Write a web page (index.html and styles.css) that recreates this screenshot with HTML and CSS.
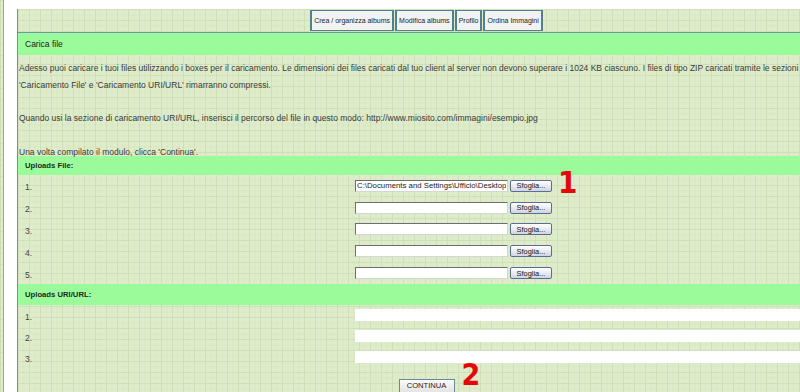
FILE: index.html
```html
<html>

<head>
  <link rel="stylesheet" href="styles.css">
  <title>
    Carica file
  </title>
</head>

<body>
  <div class="page">
    <div class="main">
      <div class="tabs">
        <a class="tab">Crea / organizza albums</a>
        <a class="tab">Modifica albums</a>
        <a class="tab">Profilo</a>
        <a class="tab">Ordina Immagini</a>
      </div>
      <div class="box">
        <div class="bar">Carica file</div>
        <div class="intro">
          Adesso puoi caricare i tuoi files utilizzando i boxes per il caricamento. Le dimensioni dei files caricati dal tuo client al server non devono superare i 1024 KB ciascuno. I files di tipo ZIP caricati tramite le sezioni<br>
          'Caricamento File' e 'Caricamento URI/URL' rimarranno compressi.<br>
          <br>
          Quando usi la sezione di caricamento URI/URL, inserisci il percorso del file in questo modo: http://www.miosito.com/immagini/esempio.jpg<br>
          <br>
          Una volta compilato il modulo, clicca 'Continua'.
        </div>

        <div class="bar sub">Uploads File:</div>
        <div class="row file">
          <span class="num">1.</span>
          <span class="field">
            <input class="path" type="text" value="C:\Documents and Settings\Ufficio\Desktop\foto.jpg">
            <button class="browse">Sfoglia...</button>
            <span class="mark one">1</span>
          </span>
        </div>
        <div class="row file">
          <span class="num">2.</span>
          <span class="field"><input class="path" type="text"><button class="browse">Sfoglia...</button></span>
        </div>
        <div class="row file">
          <span class="num">3.</span>
          <span class="field"><input class="path" type="text"><button class="browse">Sfoglia...</button></span>
        </div>
        <div class="row file">
          <span class="num">4.</span>
          <span class="field"><input class="path" type="text"><button class="browse">Sfoglia...</button></span>
        </div>
        <div class="row file">
          <span class="num">5.</span>
          <span class="field"><input class="path" type="text"><button class="browse">Sfoglia...</button></span>
        </div>

        <div class="bar sub url-bar">Uploads URI/URL:</div>
        <div class="row url">
          <span class="num">1.</span>
          <span class="field"><input class="link" type="text"></span>
        </div>
        <div class="row url">
          <span class="num">2.</span>
          <span class="field"><input class="link" type="text"></span>
        </div>
        <div class="row url">
          <span class="num">3.</span>
          <span class="field"><input class="link" type="text"></span>
        </div>

        <div class="submit">
          <span class="go">
            <button class="continua">CONTINUA</button>
            <span class="mark two">2</span>
          </span>
        </div>
      </div>
    </div>
  </div>
</body>

</html>
```

FILE: styles.css
```css
html,
body {
  margin: 0;
  height: 100%;
  overflow: hidden;
}

body {
  font-family: "Liberation Sans", Arial, sans-serif;
  font-size: 8.5px;
  color: #3a3a3a;
  background-color: #dfeccb;
  background-image:
    linear-gradient(#cfe0b6 1px, transparent 1px),
    linear-gradient(90deg, #cfe0b6 1px, transparent 1px),
    linear-gradient(#d8e7c2 1px, transparent 1px),
    linear-gradient(90deg, #d8e7c2 1px, transparent 1px);
  background-size: 11px 11px, 11px 11px, 5.5px 5.5px, 5.5px 5.5px;
}

.page {
  margin-left: 3px;
  height: 100%;
  box-sizing: border-box;
  padding: 9px 0 0 13px;
  border-left: 1px solid #9aa49a;
  background: #ffffff;
}

.main {
  width: 818px;
  height: 100%;
  padding-top: 1px;
  box-sizing: border-box;
  border-left: 1px solid #6d97a6;
  background-color: #dfeccb;
  background-image:
    linear-gradient(#cfe0b6 1px, transparent 1px),
    linear-gradient(90deg, #cfe0b6 1px, transparent 1px),
    linear-gradient(#d8e7c2 1px, transparent 1px),
    linear-gradient(90deg, #d8e7c2 1px, transparent 1px);
  background-size: 11px 11px, 11px 11px, 5.5px 5.5px, 5.5px 5.5px;
}

.tabs {
  display: flex;
  justify-content: center;
  gap: 1px;
  height: 21px;
}

.tab {
  display: flex;
  align-items: center;
  padding: 0 2px;
  border: 1px solid #52808f;
  border-left-width: 2px;
  border-right-width: 2px;
  background: #f1f2f2;
  color: #222;
  font-size: 7px;
  white-space: nowrap;
}

.box {
  margin-top: 1px;
  border-top: 1px solid #6d97a6;
}

.bar {
  height: 22px;
  line-height: 22px;
  padding-left: 7px;
  background: #9bfa9a;
  color: #222;
}

.bar.sub {
  height: 19px;
  line-height: 19px;
  font-size: 7.7px;
  font-weight: bold;
  color: #1d2a1d;
}

.bar.url-bar {
  height: 21px;
  line-height: 21px;
}

.intro {
  padding: 5px 0 0 1px;
  height: 101px;
  box-sizing: border-box;
  line-height: 16.7px;
  white-space: nowrap;
}

.row {
  display: grid;
  grid-template-columns: 330px 1fr;
  align-items: center;
  padding-left: 7px;
}

.row.file {
  height: 21.8px;
}

.row.url {
  height: 21px;
}

.num {
  padding-top: 3px;
  color: #444;
}

.field {
  position: relative;
  display: flex;
  align-items: center;
  gap: 2px;
}

.path {
  width: 153px;
  height: 12px;
  box-sizing: border-box;
  margin: 0;
  padding: 0 1px;
  border: 1px solid;
  border-color: #6e6e6e #d6d6d6 #d6d6d6 #6e6e6e;
  background: #fff;
  font-family: "Liberation Sans", Arial, sans-serif;
  font-size: 7.8px;
  color: #222;
}

.browse {
  width: 42px;
  height: 12px;
  margin: 0;
  padding: 0;
  border: 1px solid #5a6e92;
  border-radius: 2px;
  background: linear-gradient(#ffffff, #e6e7ee 60%, #cfd3e0);
  font-family: "Liberation Sans", Arial, sans-serif;
  font-size: 7.4px;
  color: #111;
}

.link {
  width: 470px;
  height: 12px;
  box-sizing: border-box;
  margin: 0;
  border: none;
  background: #fff;
}

.submit {
  display: flex;
  justify-content: center;
  padding-top: 11px;
}

.go {
  position: relative;
}

.continua {
  width: 56px;
  height: 14px;
  margin: 0;
  padding: 0;
  border: 1px solid #6a8a96;
  background: linear-gradient(#fbfbfb, #e4e4e4);
  font-family: "Liberation Sans", Arial, sans-serif;
  font-size: 7.6px;
  color: #222;
}

.mark {
  position: absolute;
  font-family: "Liberation Sans Narrow", "DejaVu Sans Condensed", sans-serif;
  font-weight: bold;
  color: #e4080a;
  line-height: 0.8;
}

.mark.one {
  left: 203px;
  top: -10px;
  font-size: 31px;
}

.mark.two {
  left: 63px;
  top: -16px;
  font-size: 30px;
}
```
